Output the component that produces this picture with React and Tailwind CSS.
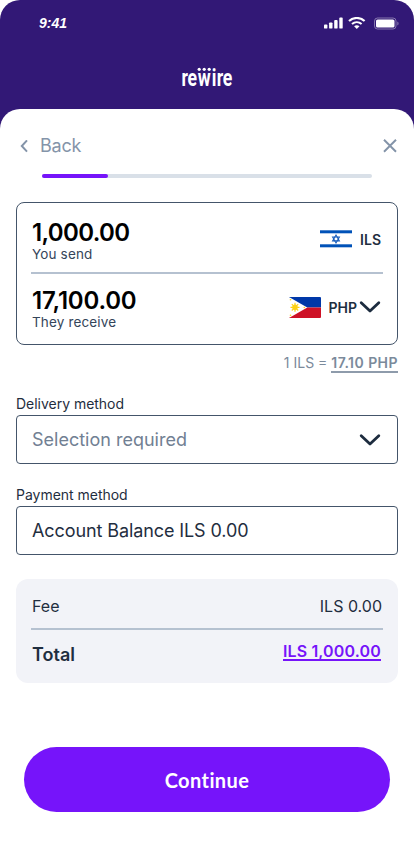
import React from "react";

const StatusBar = () => (
  <div className="flex h-[46px] items-center justify-between pl-[39px] pr-[14px]">
    <span className="font-['Liberation_Sans',sans-serif] text-[14px] font-bold italic leading-none">
      9:41
    </span>
    <div className="flex items-center">
      <svg width="20" height="12" viewBox="0 0 20 12" fill="currentColor">
        <rect x="0" y="7.6" width="3.4" height="4" rx="0.9" />
        <rect x="5.1" y="5.4" width="3.4" height="6.2" rx="0.9" />
        <rect x="10.2" y="3" width="3.4" height="8.6" rx="0.9" />
        <rect x="15.3" y="0.5" width="3.4" height="11.1" rx="0.9" />
      </svg>
      <svg className="ml-1" width="18" height="12" viewBox="0 0 18 12" fill="none" stroke="currentColor">
        <path d="M1 4.1C5.4 -0.1 12.2 -0.1 16.6 4.1" strokeWidth="2.1" />
        <path d="M4 7.1C6.8 4.5 10.8 4.5 13.6 7.1" strokeWidth="2" />
        <path d="M6.1 9.3C7.7 7.9 9.9 7.9 11.5 9.3L8.8 11.9Z" fill="currentColor" stroke="none" />
      </svg>
      <svg className="ml-2" width="26" height="13" viewBox="0 0 26 13">
        <rect x="0.5" y="1" width="21.5" height="11" rx="3" fill="none" stroke="#fff" strokeOpacity="0.4" />
        <rect x="2" y="2.5" width="18.5" height="8" rx="1.6" fill="#fff" />
        <path d="M23.4 4.5V8.5C24.9 7.8 24.9 5.2 23.4 4.5Z" fill="#fff" fillOpacity="0.45" />
      </svg>
    </div>
  </div>
);

const Logo = () => (
  <svg className="mx-auto mt-4 overflow-visible" width="56" height="30" viewBox="0 0 56 30" fill="#fff">
    <text
      transform="scale(0.72 1)"
      x="3.4 11.8 26 45.4 52.6 60.6"
      y="24"
      className="font-['Roboto',sans-serif] text-[24.5px] font-bold"
    >
      rewire
    </text>
    <circle cx="20.2" cy="7.3" r="1.6" />
    <circle cx="25.2" cy="7.3" r="1.6" />
    <circle cx="30.2" cy="7.3" r="1.6" />
  </svg>
);

const ChevronDown = () => (
  <svg className="mr-px" width="22" height="14" viewBox="0 0 22 14" fill="none" stroke="#1d2c3f" strokeWidth="2.8" strokeLinecap="round" strokeLinejoin="round">
    <path d="M2.2 2.7L11 11L19.8 2.7" />
  </svg>
);

const IsraelFlag = () => (
  <svg width="32" height="18" viewBox="0 0 32 18">
    <rect width="32" height="18" fill="#fff" />
    <rect y="0.3" width="32" height="3" fill="#0052b8" />
    <rect y="14.3" width="32" height="3" fill="#0052b8" />
    <g fill="none" stroke="#1b5fbd" strokeWidth="1.1">
      <path d="M16 5L19.4 10.9H12.6Z" />
      <path d="M16 12.9L19.4 7H12.6Z" />
    </g>
  </svg>
);

const PhilippinesFlag = () => (
  <svg className="rounded-[1px]" width="32" height="21" viewBox="0 0 32 21">
    <rect width="32" height="10.5" fill="#0038a8" />
    <rect y="10.5" width="32" height="10.5" fill="#ce1126" />
    <path d="M0 0L18.3 10.5L0 21Z" fill="#fff" />
    <g stroke="#fcd116" strokeWidth="1.2">
      <path d="M6 5.8V14.8M1.5 10.3H10.5M2.8 7.1L9.2 13.5M9.2 7.1L2.8 13.5" />
    </g>
    <circle cx="6" cy="10.3" r="2.7" fill="#fcd116" />
    <circle cx="1.5" cy="2.8" r="0.8" fill="#fcd116" />
    <circle cx="1.5" cy="18.2" r="0.8" fill="#fcd116" />
    <circle cx="15.3" cy="10.5" r="0.8" fill="#fcd116" />
  </svg>
);

const Amount = ({ label, children }) => (
  <div>
    <p className="text-[24px] font-semibold leading-[26px] text-black">{children}</p>
    <p className="text-[13.5px] leading-[17px] tracking-[0.15px] text-[#34455a]">{label}</p>
  </div>
);

const Field = ({ label, children }) => (
  <div>
    <p className="text-[14px] leading-[22px] tracking-[-0.02px]">{label}</p>
    <div className="flex h-[49px] items-center justify-between rounded-[4px] border border-[#44556a] px-[15px] text-[18px]">
      {children}
    </div>
  </div>
);

const App = () => {
  return (
    <div className="h-[844px] w-[414px] overflow-hidden rounded-t-[20px] bg-[#321876] font-['Inter',sans-serif] text-[#1f2e40]">
      <header className="h-[109px] text-white">
        <StatusBar />
        <Logo />
      </header>

      <main className="h-[735px] rounded-t-[20px] bg-white px-4 pt-[25px]">
        {/* Navigation */}
        <div className="flex h-6 items-center justify-between text-[#8494a9]">
          <button className="flex items-center pl-1 text-[18px]">
            <svg width="8" height="13" viewBox="0 0 8 13" fill="none" stroke="currentColor" strokeWidth="2">
              <path d="M7 0.4L1.8 6L7 11.6" />
            </svg>
            <span className="-mt-px ml-3 tracking-[-0.2px]">Back</span>
          </button>
          <svg className="mr-[1px]" width="14" height="14" viewBox="0 0 14 14" fill="none" stroke="currentColor" strokeWidth="2">
            <path d="M1 0.8L13 12.8M13 0.8L1 12.8" />
          </svg>
        </div>

        <div className="mx-[26px] mt-4 h-1 rounded-full bg-[#d9e0e8]">
          <div className="h-1 w-1/5 rounded-full bg-[#7614fa]" />
        </div>

        {/* Amounts */}
        <section className="mt-6 h-[143px] rounded-[8px] border border-[#44556a] px-[15px] pt-[17px]">
          <div className="flex justify-between">
            <Amount label="You send">
              <span className="tracking-[-0.65px]">1,000.00</span>
            </Amount>
            <div className="mr-px flex h-[38px] items-center gap-2">
              <IsraelFlag />
              <span className="text-[14px] font-semibold">ILS</span>
            </div>
          </div>
          <div className="-mx-px mt-[9px] h-[2px] bg-[#b5c1d0]" />
          <div className="mt-[14px] flex justify-between">
            <Amount label="They receive">
              <span className="tracking-[-0.2px]">17,100.00</span>
            </Amount>
            <div className="flex h-[38px] items-center">
              <PhilippinesFlag />
              <span className="ml-2 mr-[2px] text-[14px] font-semibold">PHP</span>
              <ChevronDown />
            </div>
          </div>
        </section>

        <p className="mt-2 text-right text-[14px] leading-5 text-[#7b8a9b]">
          1 ILS = <span className="border-b-2 border-[#8e9bab] font-semibold tracking-[0.45px]">17.10 PHP</span>
        </p>

        {/* Methods */}
        <div className="mt-5 flex flex-col gap-5">
          <Field label="Delivery method">
            <span className="text-[#718093]">Selection required</span>
            <ChevronDown />
          </Field>
          <Field label="Payment method">
            <span className="tracking-[-0.1px]">Account Balance ILS 0.00</span>
          </Field>
        </div>

        {/* Summary */}
        <section className="mt-6 h-[104px] rounded-[12px] bg-[#f2f3f8] px-4 pt-[15px]">
          <div className="flex h-6 items-center justify-between text-[16px]">
            <span>Fee</span>
            <span>ILS 0.00</span>
          </div>
          <div className="-mx-px mt-[10px] h-[2px] bg-[#b5c1d0]" />
          <div className="mt-[11px] flex justify-between">
            <span className="mt-px text-[18px] font-semibold leading-[26px]">Total</span>
            <span className="mr-px h-5 border-b-2 border-[#7614fa] text-[16px] font-semibold leading-5 tracking-[0.15px] text-[#7614fa]">
              ILS 1,000.00
            </span>
          </div>
        </section>

        <button className="mx-2 mt-16 h-[65px] w-[366px] rounded-full bg-[#7614fa] font-['Lato',sans-serif] text-[20px] font-bold tracking-[0.4px] text-white">
          Continue
        </button>
      </main>
    </div>
  );
};

export default App;
